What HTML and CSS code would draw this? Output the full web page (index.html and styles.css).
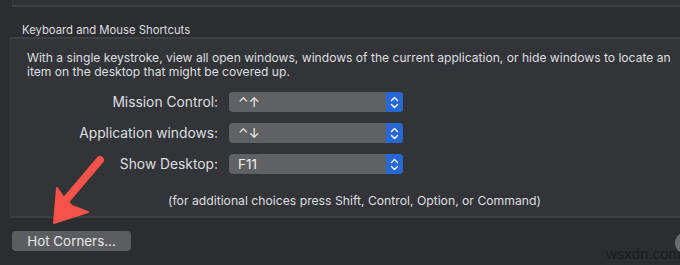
FILE: index.html
```html
<!DOCTYPE html>
<html lang="en">

<head>
  <meta charset="UTF-8">
  <meta name="viewport" content="width=device-width, initial-scale=1.0">
  <title>Mission Control</title>
  <link rel="stylesheet" href="styles.css">
</head>

<body>
  <div class="pane">
    <div class="top-box"></div>

    <div class="section-title">Keyboard and Mouse Shortcuts</div>

    <div class="group">
      <p class="desc">With a single keystroke, view all open windows, windows of the current application, or hide windows to locate an item on the desktop that might be covered up.</p>

      <div class="rows">
        <label class="row-label">Mission Control:</label>
        <div class="popup"><span class="popup-value">&#8963;&#8593;</span><span class="stepper"><svg width="9" height="13" viewBox="0 0 9 13"><path d="M1.5 4.5 L4.5 1.5 L7.5 4.5 M1.5 8.5 L4.5 11.5 L7.5 8.5" fill="none" stroke="#fff" stroke-width="1.4" stroke-linecap="round" stroke-linejoin="round"/></svg></span></div>

        <label class="row-label">Application windows:</label>
        <div class="popup"><span class="popup-value">&#8963;&#8595;</span><span class="stepper"><svg width="9" height="13" viewBox="0 0 9 13"><path d="M1.5 4.5 L4.5 1.5 L7.5 4.5 M1.5 8.5 L4.5 11.5 L7.5 8.5" fill="none" stroke="#fff" stroke-width="1.4" stroke-linecap="round" stroke-linejoin="round"/></svg></span></div>

        <label class="row-label">Show Desktop:</label>
        <div class="popup"><span class="popup-value">F11</span><span class="stepper"><svg width="9" height="13" viewBox="0 0 9 13"><path d="M1.5 4.5 L4.5 1.5 L7.5 4.5 M1.5 8.5 L4.5 11.5 L7.5 8.5" fill="none" stroke="#fff" stroke-width="1.4" stroke-linecap="round" stroke-linejoin="round"/></svg></span></div>
      </div>

      <p class="note">(for additional choices press Shift, Control, Option, or Command)</p>
    </div>

    <button class="hot-btn">Hot Corners...</button>

    <div class="help-btn"></div>
    <div class="watermark">wsxdn.com</div>

    <!-- red annotation arrow -->
    <svg class="arrow" width="120" height="80" viewBox="0 0 120 80">
      <path d="M100 4 L66 44" stroke="#f4524a" stroke-width="8" stroke-linecap="round" fill="none"/>
      <path d="M57 32 L54 67 L88 56 L72 50 L64 42 Z" fill="#f4524a" stroke="#f4524a" stroke-width="2" stroke-linejoin="round"/>
    </svg>
  </div>
</body>

</html>
```

FILE: styles.css
```css
* {
  box-sizing: border-box;
}

body {
  margin: 0;
  background-color: #2b2d30;
  font-family: Inter, "Noto Sans", sans-serif;
  font-size: 12.1px;
  color: #dedfe0;
}

.pane {
  position: relative;
  width: 680px;
  height: 265px;
  overflow: hidden;
}

.top-box {
  height: 7px;
  margin-left: 12px;
  background-color: #303235;
  border-left: 1px solid #3c3e41;
  border-bottom: 2px solid #3e4043;
}

.section-title {
  padding: 15px 0 0 22px;
  height: 30px;
  line-height: 16px;
  font-size: 11.3px;
}

.group {
  margin-left: 10px;
  width: 690px;
  height: 181px;
  background-color: #323437;
  border-top: 2px solid #3d3f42;
  border-left: 1px solid #3a3c3f;
  border-bottom: 2px solid #3d3f42;
}

.desc {
  margin: 0;
  padding: 12px 0 0 16px;
  width: 670px;
  line-height: 14px;
}

.rows {
  display: grid;
  grid-template-columns: 207px 174px;
  column-gap: 11px;
  row-gap: 11px;
  margin-top: 13px;
}

.row-label {
  text-align: right;
  line-height: 20px;
  font-size: 13.8px;
}

.popup {
  display: flex;
  height: 20px;
  border-radius: 4px;
  background-color: #606163;
  overflow: hidden;
  font-size: 13.5px;
}

.popup-value {
  flex: 1;
  padding-left: 9px;
  line-height: 20px;
  color: #f0f0f0;
  font-family: Inter, "DejaVu Sans", sans-serif;
}

.stepper {
  width: 17px;
  display: flex;
  justify-content: center;
  align-items: center;
  background-color: #2767d6;
}

.note {
  margin: 0;
  padding: 19px 0 0 157px;
  line-height: 16px;
  font-size: 12.2px;
}

.hot-btn {
  display: block;
  margin: 13px 0 0 12px;
  width: 119px;
  height: 20px;
  padding: 0;
  border: none;
  border-radius: 4px;
  background-color: #5c5d60;
  color: #e8e8e8;
  font-family: Inter, "Noto Sans", sans-serif;
  font-size: 13.4px;
}

.help-btn {
  position: absolute;
  left: 675px;
  top: 232px;
  width: 22px;
  height: 22px;
  border-radius: 50%;
  background-color: #6a6b6d;
}

.watermark {
  position: absolute;
  left: 606px;
  top: 245px;
  font-family: "Liberation Sans", sans-serif;
  font-size: 15px;
  color: #1c1c1c;
}

.arrow {
  position: absolute;
  left: 0;
  top: 156px;
}
```
